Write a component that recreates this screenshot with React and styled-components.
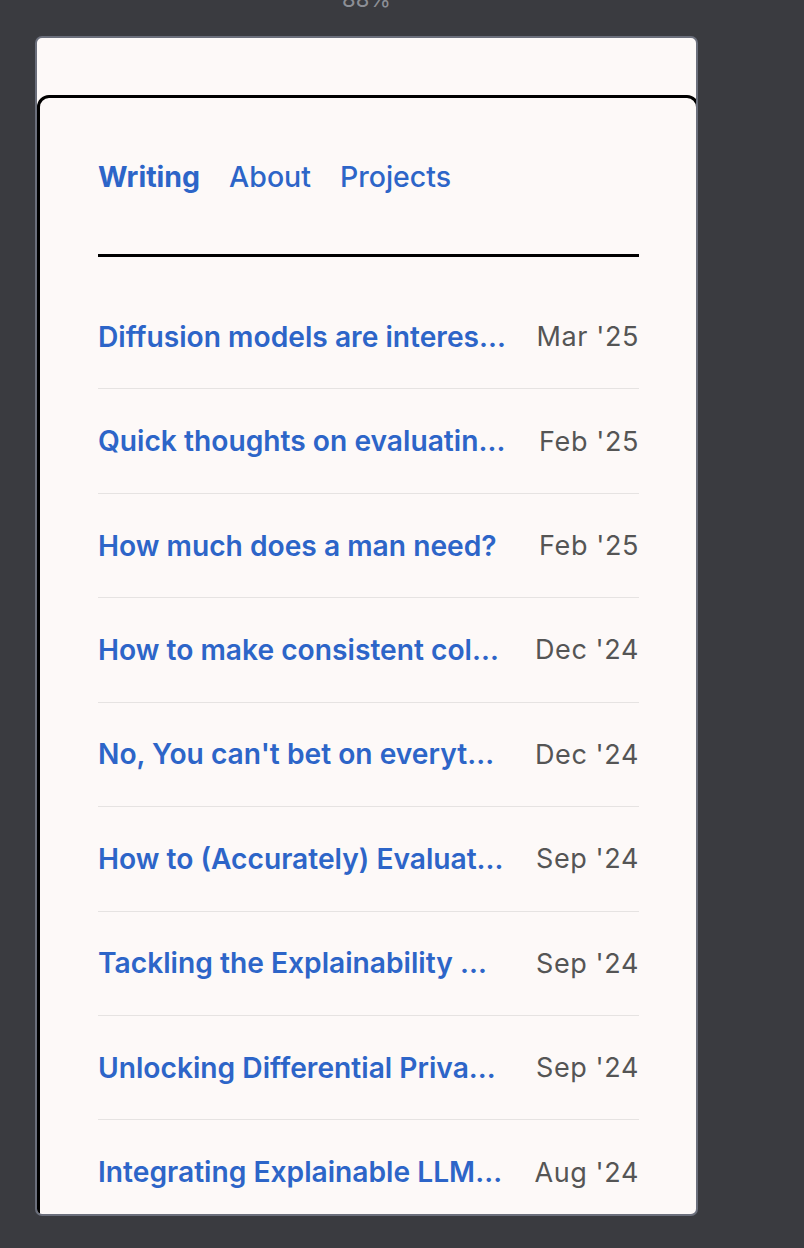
import React from 'react'
import styled, { createGlobalStyle } from 'styled-components'

const GlobalStyle = createGlobalStyle`
   html, body {
      margin: 0;
      background: #3a3b40;
      font-family: Inter, "Noto Sans", sans-serif;
   }
`

const posts = [
   { title: 'Diffusion models are interesting, actually', date: "Mar '25" },
   { title: 'Quick thoughts on evaluating agents', date: "Feb '25" },
   { title: 'How much does a man need?', date: "Feb '25" },
   { title: 'How to make consistent colour palettes', date: "Dec '24" },
   { title: "No, You can't bet on everything", date: "Dec '24" },
   { title: 'How to (Accurately) Evaluate RAG systems', date: "Sep '24" },
   { title: 'Tackling the Explainability Gap in LLMs', date: "Sep '24" },
   { title: 'Unlocking Differential Privacy for ML', date: "Sep '24" },
   { title: 'Integrating Explainable LLMs into products', date: "Aug '24" },
]

function App() {
   return (
      <Page>
         <GlobalStyle />
         <ZoomLabel>88%</ZoomLabel>
         <Frame>
            <Card>
               <Nav>
                  <NavLink $active>Writing</NavLink>
                  <NavLink>About</NavLink>
                  <NavLink>Projects</NavLink>
               </Nav>
               <Rule />
               <PostList>
                  {posts.map((p) => (
                     <PostRow key={p.title}>
                        <PostTitle>{p.title}</PostTitle>
                        <PostDate>{p.date}</PostDate>
                     </PostRow>
                  ))}
               </PostList>
            </Card>
         </Frame>
      </Page>
   )
}

export default App

const Page = styled.div`
   width: 663px;
   margin-left: 35px;
   height: 1248px;
   overflow: hidden;
`

const ZoomLabel = styled.div`
   height: 22px;
   line-height: 22px;
   margin-top: -12px;
   margin-bottom: 26px;
   text-align: center;
   font-size: 22px;
   color: #8c8f96;
`

const Frame = styled.div`
   box-sizing: border-box;
   height: 1180px;
   border: 2px solid #6b6f7c;
   border-radius: 7px;
   background: #fdf9f8;
   overflow: hidden;
   padding-top: 57px;
`

const Card = styled.div`
   box-sizing: border-box;
   margin-right: -3px;
   min-height: 1200px;
   border: 3px solid #000;
   border-radius: 12px;
   padding: 61px 57px 0 58px;
`

const Nav = styled.nav`
   display: flex;
   gap: 29px;
   height: 34px;
   align-items: center;
`

const NavLink = styled.a`
   font-size: 28.5px;
   font-weight: ${(p) => (p.$active ? 700 : 500)};
   color: #2d65c8;
   cursor: pointer;
`

const Rule = styled.hr`
   margin: 61px 0 0;
   border: none;
   height: 3px;
   background: #000;
`

const PostList = styled.ul`
   list-style: none;
   margin: 28px 0 0;
   padding: 0;
`

const PostRow = styled.li`
   box-sizing: border-box;
   height: 104.43px;
   display: flex;
   align-items: center;
   border-bottom: 1.5px solid #e6e3e2;
`

const PostTitle = styled.span`
   flex: 1;
   min-width: 0;
   white-space: nowrap;
   overflow: hidden;
   text-overflow: ellipsis;
   font-size: 28.2px;
   font-weight: 600;
   color: #2d65c8;
`

const PostDate = styled.span`
   margin-left: 30px;
   font-size: 27px;
   color: #555;
   letter-spacing: 0.6px;
   white-space: nowrap;
`
